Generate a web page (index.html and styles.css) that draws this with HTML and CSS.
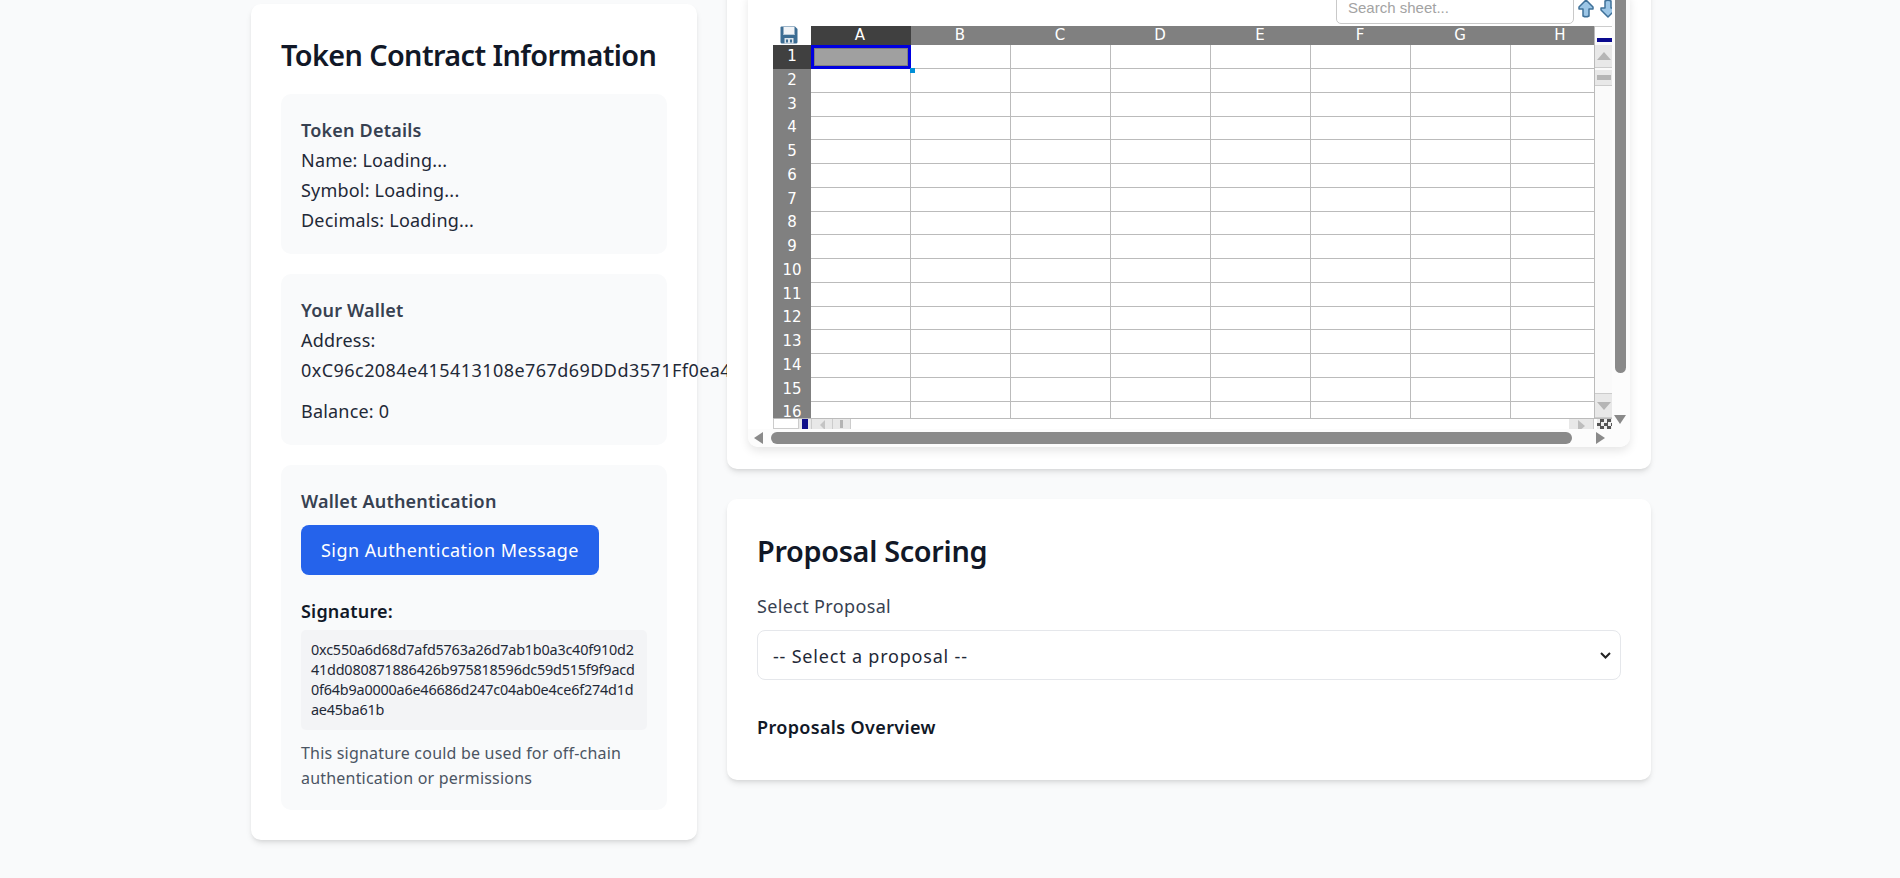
FILE: index.html
```html
<!DOCTYPE html>
<html lang="en">
<head>
<meta charset="utf-8">
<title>Token Dashboard</title>
<link rel="stylesheet" href="styles.css">
</head>
<body>
<main class="layout">
  <section class="card info-card">
    <h2 class="title">Token Contract Information</h2>
    <div class="panel">
      <h3 class="panel-head">Token Details</h3>
      <p class="line">Name: Loading...</p>
      <p class="line">Symbol: Loading...</p>
      <p class="line">Decimals: Loading...</p>
    </div>
    <div class="panel">
      <h3 class="panel-head">Your Wallet</h3>
      <p class="line">Address:</p>
      <p class="line address">0xC96c2084e415413108e767d69DDd3571Ff0ea4</p>
      <p class="line balance">Balance: 0</p>
    </div>
    <div class="panel">
      <h3 class="panel-head">Wallet Authentication</h3>
      <button class="btn" type="button">Sign Authentication Message</button>
      <p class="sig-label">Signature:</p>
      <div class="sig-box">0xc550a6d68d7afd5763a26d7ab1b0a3c40f910d241dd080871886426b975818596dc59d515f9f9acd0f64b9a0000a6e46686d247c04ab0e4ce6f274d1dae45ba61b</div>
      <p class="note">This signature could be used for off-chain authentication or permissions</p>
    </div>
  </section>

  <div class="main-col">
    <section class="card sheet-card">
      <div class="frame">
        <div class="frame-body">
          <div class="toolbar">
            <input class="search" type="text" placeholder="Search sheet...">
            <svg class="nav-arrow" width="16" height="20" viewBox="0 0 16 20"><path d="M8 1 L15 8 V10 H11 V17 Q8 18.5 5 17 V10 H1 V8 Z" fill="#9cc6e6" stroke="#3f7199" stroke-width="1.5" stroke-linejoin="round"/></svg>
            <svg class="nav-arrow" width="16" height="20" viewBox="0 0 16 20"><path d="M8 18 L15 11 V9 H11 V2 Q8 .5 5 2 V9 H1 V11 Z" fill="#9cc6e6" stroke="#3f7199" stroke-width="1.5" stroke-linejoin="round"/></svg>
          </div>
          <div class="grid-main">
            <div class="sheet-clip">
              <table class="sheet">
                <thead>
                  <tr>
                    <th class="corner"><svg width="18" height="18" viewBox="0 0 18 18"><path d="M1.5 .5 H15 L17.5 3 V16 Q17.5 17.5 16 17.5 H2 Q.5 17.5 .5 16 V1.5 Q.5 .5 1.5 .5 Z" fill="#3c6d93"/><rect x="3.5" y="1" width="11" height="8" fill="#f1f4f7"/><rect x="3.5" y="8" width="11" height="1" fill="#b9cbd9"/><rect x="4.5" y="12" width="9" height="5.5" fill="#dbe4eb"/><rect x="6" y="13.5" width="2" height="3" fill="#3c6d93"/><rect x="10" y="13.5" width="2" height="3" fill="#3c6d93"/></svg></th>
                    <th class="col active">A</th><th class="col">B</th><th class="col">C</th><th class="col">D</th><th class="col">E</th><th class="col">F</th><th class="col">G</th><th class="col">H</th>
                  </tr>
                </thead>
                <tbody>
                  <tr><th class="rowh active">1</th><td class="cell-sel"><span class="handle"></span></td><td></td><td></td><td></td><td></td><td></td><td></td><td></td></tr>
                  <tr><th class="rowh">2</th><td></td><td></td><td></td><td></td><td></td><td></td><td></td><td></td></tr>
                  <tr><th class="rowh">3</th><td></td><td></td><td></td><td></td><td></td><td></td><td></td><td></td></tr>
                  <tr><th class="rowh">4</th><td></td><td></td><td></td><td></td><td></td><td></td><td></td><td></td></tr>
                  <tr><th class="rowh">5</th><td></td><td></td><td></td><td></td><td></td><td></td><td></td><td></td></tr>
                  <tr><th class="rowh">6</th><td></td><td></td><td></td><td></td><td></td><td></td><td></td><td></td></tr>
                  <tr><th class="rowh">7</th><td></td><td></td><td></td><td></td><td></td><td></td><td></td><td></td></tr>
                  <tr><th class="rowh">8</th><td></td><td></td><td></td><td></td><td></td><td></td><td></td><td></td></tr>
                  <tr><th class="rowh">9</th><td></td><td></td><td></td><td></td><td></td><td></td><td></td><td></td></tr>
                  <tr><th class="rowh">10</th><td></td><td></td><td></td><td></td><td></td><td></td><td></td><td></td></tr>
                  <tr><th class="rowh">11</th><td></td><td></td><td></td><td></td><td></td><td></td><td></td><td></td></tr>
                  <tr><th class="rowh">12</th><td></td><td></td><td></td><td></td><td></td><td></td><td></td><td></td></tr>
                  <tr><th class="rowh">13</th><td></td><td></td><td></td><td></td><td></td><td></td><td></td><td></td></tr>
                  <tr><th class="rowh">14</th><td></td><td></td><td></td><td></td><td></td><td></td><td></td><td></td></tr>
                  <tr><th class="rowh">15</th><td></td><td></td><td></td><td></td><td></td><td></td><td></td><td></td></tr>
                  <tr><th class="rowh">16</th><td></td><td></td><td></td><td></td><td></td><td></td><td></td><td></td></tr>
                </tbody>
              </table>
            </div>
            <div class="inner-v">
              <span class="iv-gap"></span>
              <span class="iv-blue"></span>
              <span class="iv-tile tall"><i class="tri-up"></i></span>
              <span class="iv-tile"><i class="dash"></i></span>
              <span class="iv-track"></span>
              <span class="iv-tile tall last"><i class="tri-down"></i></span>
            </div>
          </div>
          <div class="inner-h">
            <span class="ih-white"></span>
            <span class="ih-tile first"><i class="blue-tab"></i></span>
            <span class="ih-tile mid"><i class="tri-left"></i></span>
            <span class="ih-tile end"><i class="dash-v"></i></span>
            <span class="ih-track"></span>
            <span class="ih-tile wide"><i class="tri-right"></i></span>
            <span class="ih-corner"></span>
          </div>
        </div>
        <div class="vbar">
          <span class="vbar-thumb"></span>
          <span class="arrow-down"></span>
        </div>
        <div class="hbar">
          <span class="arrow-left"></span>
          <span class="hbar-thumb"></span>
          <span class="arrow-right"></span>
        </div>
      </div>
    </section>

    <section class="card proposal-card">
      <h2 class="title proposal-title">Proposal Scoring</h2>
      <label class="field-label" for="proposal">Select Proposal</label>
      <div class="select-wrap">
        <select class="select" id="proposal"><option>-- Select a proposal --</option></select>
        <svg class="chevron" width="11" height="7" viewBox="0 0 11 7"><path d="M1 1 L5.5 5.5 L10 1" fill="none" stroke="#222" stroke-width="2"/></svg>
      </div>
      <h3 class="overview">Proposals Overview</h3>
    </section>
  </div>
</main>
</body>
</html>
```
FILE: styles.css
```css
* { box-sizing: border-box; }
html, body { margin: 0; height: 878px; overflow: hidden; }
body {
  background: #f9fafb;
  font-family: "Noto Sans", "Open Sans", sans-serif;
  font-size: 18px;
  line-height: 30px;
  color: #1f2937;
  letter-spacing: 0.2px;
}
h2, h3, p { margin: 0; }

.layout { display: flex; align-items: flex-start; gap: 30px; width: 1400px; margin: 4px 0 0 251px; }

.card { background: #fff; border-radius: 10px; box-shadow: 0 4px 6px -1px rgba(0,0,0,.1), 0 2px 4px -2px rgba(0,0,0,.1); }
.info-card { width: 446px; flex: none; padding: 29px 30px 30px; }
.title { font-size: 28.8px; line-height: 44px; font-weight: 600; color: #111827; letter-spacing: -0.6px; }
.info-card .title { margin-bottom: 17px; }
.proposal-title { letter-spacing: -0.3px; }

.panel { background: #f9fafb; border-radius: 10px; padding: 21px 20px 19px; margin-bottom: 20px; }
.panel:last-child { margin-bottom: 0; }
.panel-head { font-size: 18px; line-height: 30px; font-weight: 600; color: #374151; }
.address { letter-spacing: 0.45px; }
.balance { margin-top: 11px; }

.btn {
  display: block; height: 50px; margin-top: 9px; padding: 0 20px;
  background: #2563eb; color: #fff; border: 0; border-radius: 8px;
  font: inherit; letter-spacing: 0.45px;
}
.sig-label { margin-top: 21px; font-weight: 600; color: #111827; }
.sig-box {
  margin-top: 4px; padding: 10px; background: #f3f4f6; border-radius: 5px;
  font-size: 14.4px; line-height: 20px; word-break: break-all; letter-spacing: -0.2px; color: #1f2937;
}
.note { margin-top: 11px; font-size: 16px; line-height: 25px; letter-spacing: 0.2px; color: #4b5563; }

.main-col { flex: 1; min-width: 0; margin-top: -44px; position: relative; display: flex; flex-direction: column; gap: 30px; }
.sheet-card { padding: 30px 21px 22px; }

.frame {
  display: grid; grid-template-columns: 864px 18px; grid-template-rows: 439px 18px;
  background: #fff; border-radius: 10px; overflow: hidden;
  box-shadow: 0 4px 10px rgba(0,0,0,.1);
}
.frame-body { padding-left: 25px; overflow: hidden; letter-spacing: 0; }
.toolbar { height: 36px; display: flex; justify-content: flex-end; gap: 6px; margin-right: -4px; }
.search {
  width: 238px; height: 34px; margin-right: -2px; padding: 1px 11px 0; align-self: flex-end; margin-bottom: 2px;
  border: 1px solid #c9c9c9; border-radius: 5px; background: #fff;
  font: 15px "Liberation Sans", sans-serif; color: #333;
}
.search::placeholder { color: #a3a3a3; opacity: 1; }
.nav-arrow { flex: none; align-self: flex-end; margin-bottom: 7px; }

.grid-main { display: flex; height: 392px; overflow: hidden; }
.sheet-clip { width: 821px; flex: none; overflow: hidden; }
.sheet { table-layout: fixed; border-collapse: separate; border-spacing: 0; width: 838px; font-family: "DejaVu Sans", sans-serif; font-size: 15px; line-height: 19px; }
.sheet th { padding: 0; font-weight: 400; color: #fff; text-align: center; overflow: hidden; }
.corner { width: 38px; height: 19px; background: #fff; vertical-align: top; }
.corner svg { display: block; margin: 0 0 0 7px; }
.col { width: 100px; height: 19px; background: #808080; padding-right: 2px !important; }
.rowh { height: 24px; background: #808080; padding-bottom: 2px !important; }
.active { background: #404040 !important; }
.sheet td { height: 24px; padding: 0; border-right: 1px solid #bbb; border-bottom: 1px solid #bbb; background: #fff; }
.sheet tbody tr:nth-child(4n) th, .sheet tbody tr:nth-child(4n) td { height: 23px; }
.sheet td.cell-sel { position: relative; z-index: 1; background: #a0a0a0; border: 3px solid #0000e0; outline: 1px solid #808080; outline-offset: -4px; }
.handle { position: absolute; right: -7px; bottom: -7px; width: 5px; height: 5px; background: #0090d8; }

.inner-v { width: 18px; flex: none; display: flex; flex-direction: column; background: #fafafa; border-left: 1px solid #bbb; }
.iv-gap { height: 12px; background: #fff; border-top: 1px solid #ccc; }
.iv-blue { height: 4px; margin-left: 2px; background: #0a0a8f; }
.iv-tile { height: 16px; margin-top: 2px; background: #e8e8e8; border-bottom: 1px solid #ccc; display: flex; align-items: center; justify-content: center; }
.iv-tile.tall { height: 23px; margin-top: 3px; }
.iv-tile.last { height: 25px; margin-top: 0; border-top: 1px solid #ccc; }
.iv-track { flex: 1; }
.tri-up, .tri-down, .tri-left, .tri-right { display: block; width: 0; height: 0; }
.tri-up { border: 7px solid transparent; border-top: 0; border-bottom: 8px solid #b5b5b5; }
.tri-down { border: 7px solid transparent; border-bottom: 0; border-top: 8px solid #b5b5b5; }
.tri-left { border: 5px solid transparent; border-left: 0; border-right: 5px solid #c4c4c4; transform: translateY(1px); }
.tri-right { border: 6px solid transparent; border-right: 0; border-left: 7px solid #bdbdbd; transform: translateY(2px); }
.dash { display: block; width: 14px; height: 5px; background: #b5b5b5; }
.dash-v { display: block; width: 3px; height: 8px; background: #b5b5b5; }

.inner-h { display: flex; height: 11px; border-top: 1px solid #bbb; }
.ih-white { width: 26px; background: #fff; border: 1px solid #ccc; border-top: 0; }
.ih-tile { background: #e8e8e8; border-right: 1px solid #ccc; display: flex; align-items: center; justify-content: center; }
.ih-tile.first { width: 13px; }
.ih-tile.mid { width: 21px; }
.ih-tile.end { width: 18px; }
.ih-tile.wide { width: 25px; }
.blue-tab { display: block; width: 6px; height: 11px; background: #10108a; }
.ih-track { flex: 1; background: #fff; }
.ih-corner { width: 15px; margin-left: 3px; background: repeating-conic-gradient(#555 0 25%, #eee 0 50%) 0 0 / 7px 7px; }

.vbar { position: relative; background: #fcfcfc; }
.vbar-thumb { display: block; width: 11px; height: 383px; margin-left: 3px; background: #8a8a8a; border-radius: 0 0 6px 6px; }
.arrow-down { position: absolute; left: 2px; top: 425px; width: 0; height: 0; border: 6.5px solid transparent; border-bottom: 0; border-top: 9px solid #8a8a8a; }
.hbar { grid-column: 1 / 3; display: flex; align-items: center; background: #fcfcfc; padding-left: 6px; height: 18px; }
.arrow-left { width: 0; height: 0; border: 6px solid transparent; border-left: 0; border-right: 9px solid #8a8a8a; }
.hbar-thumb { width: 801px; height: 12px; margin-left: 8px; border-radius: 6px; background: #8a8a8a; }
.arrow-right { width: 0; height: 0; margin-left: 24px; border: 6px solid transparent; border-right: 0; border-left: 9px solid #8a8a8a; }

.proposal-card { padding: 29px 30px 30px; height: 281px; }
.proposal-card .title { line-height: 46px; }
.field-label { display: block; margin-top: 17px; font-size: 18px; line-height: 30px; letter-spacing: 0.35px; color: #374151; }
.select-wrap { position: relative; margin-top: 9px; }
.select {
  display: block; width: 100%; height: 50px; padding: 2px 15px 0;
  appearance: none; background: #fff; border: 1px solid #e5e7eb; border-radius: 8px;
  font: inherit; letter-spacing: 0.8px; color: #1f2937;
}
.chevron { position: absolute; right: 10px; top: 22px; }
.overview { margin-top: 32px; font-size: 18px; line-height: 30px; font-weight: 600; letter-spacing: 0.35px; color: #111827; }
```
